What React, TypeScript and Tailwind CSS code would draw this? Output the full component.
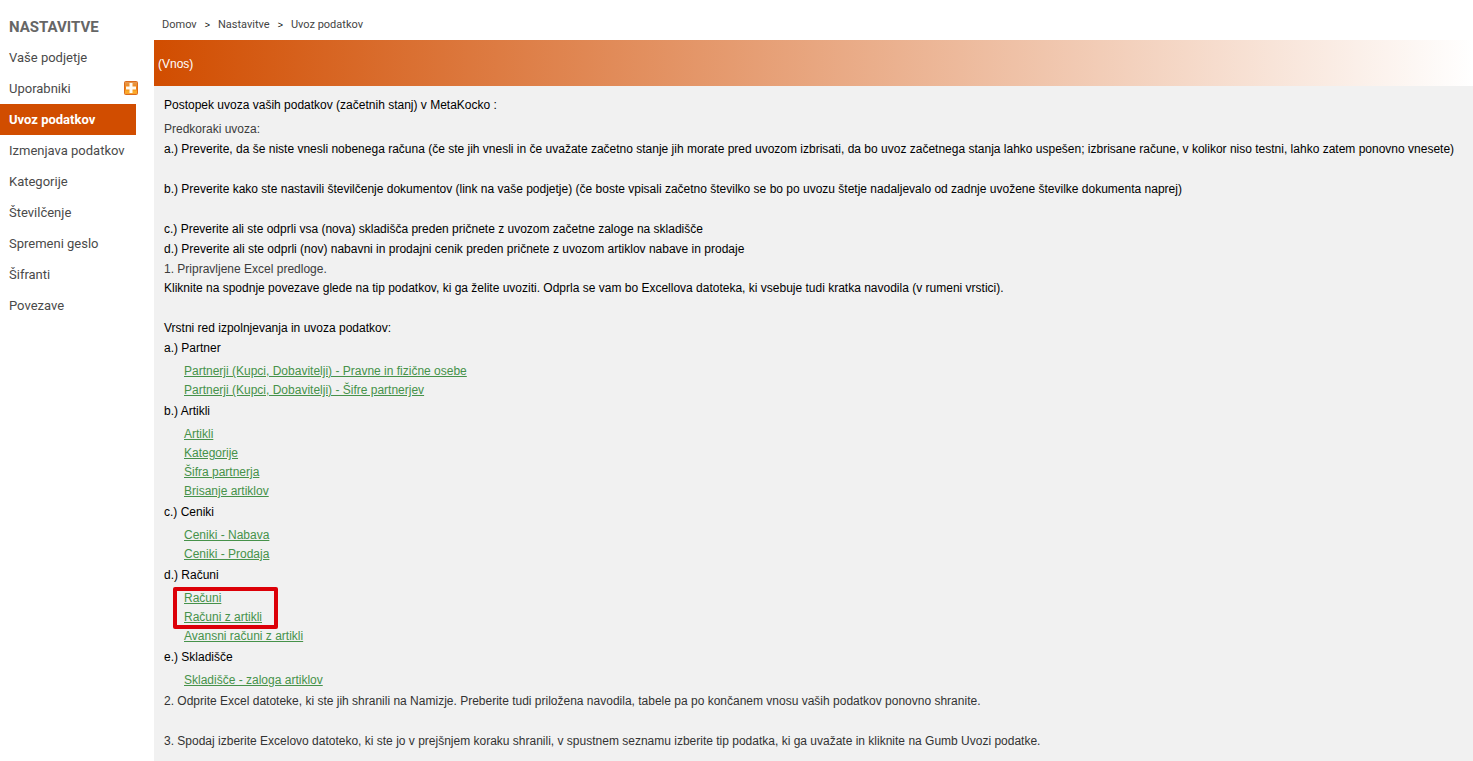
import React from "react";

type MenuItem = { label: string; active?: boolean; addLabel?: string };
type LinkEntry = { label: string; marked?: boolean };
type Group = { title: string; links: LinkEntry[] };

const menu: MenuItem[] = [
  { label: "Vaše podjetje" },
  { label: "Uporabniki", addLabel: "Dodaj uporabnika" },
  { label: "Uvoz podatkov", active: true },
  { label: "Izmenjava podatkov" },
  { label: "Kategorije" },
  { label: "Številčenje" },
  { label: "Spremeni geslo" },
  { label: "Šifranti" },
  { label: "Povezave" },
];

const groups: Group[] = [
  {
    title: "a.) Partner",
    links: [
      { label: "Partnerji (Kupci, Dobavitelji) - Pravne in fizične osebe" },
      { label: "Partnerji (Kupci, Dobavitelji) - Šifre partnerjev" },
    ],
  },
  {
    title: "b.) Artikli",
    links: [
      { label: "Artikli" },
      { label: "Kategorije" },
      { label: "Šifra partnerja" },
      { label: "Brisanje artiklov" },
    ],
  },
  {
    title: "c.) Ceniki",
    links: [{ label: "Ceniki - Nabava" }, { label: "Ceniki - Prodaja" }],
  },
  {
    title: "d.) Računi",
    links: [
      { label: "Računi", marked: true },
      { label: "Računi z artikli", marked: true },
      { label: "Avansni računi z artikli" },
    ],
  },
  { title: "e.) Skladišče", links: [{ label: "Skladišče - zaloga artiklov" }] },
];

function PlusIcon() {
  return (
    <svg viewBox="0 0 14 14" className="size-3.5" aria-hidden="true">
      <defs>
        <linearGradient id="plus-fill" x1="0" y1="0" x2="0" y2="1">
          <stop offset="0" stopColor="#e39a58" />
          <stop offset="0.4" stopColor="#ef8a1e" />
          <stop offset="0.5" stopColor="#ee7a08" />
          <stop offset="0.8" stopColor="#fcb02c" />
          <stop offset="1" stopColor="#f79a2c" />
        </linearGradient>
      </defs>
      <rect x="0.5" y="0.5" width="13" height="13" rx="1" fill="url(#plus-fill)" stroke="#dc6a1c" />
      <path d="M5.5 2h3v3.5H12v3H8.5V12h-3V8.5H2v-3h3.5z" fill="#fffaf2" />
    </svg>
  );
}

function Sidebar() {
  return (
    <nav aria-label="Nastavitve" className="w-[136px] shrink-0 pt-3 font-['Roboto',sans-serif]">
      <h2 className="pl-[9px] text-[15px] leading-[30px] font-bold text-[#666666]">NASTAVITVE</h2>
      <ul>
        {menu.map((item) => (
          <li key={item.label} className="relative">
            <a
              href="#"
              aria-current={item.active ? "page" : undefined}
              className={
                item.active
                  ? "block bg-[#d14d00] pl-[9px] text-[13px] leading-[31px] font-bold text-white"
                  : "block pl-[9px] text-[13px] leading-[31px] text-[#4a4a4a]"
              }
            >
              {item.label}
            </a>
            {item.addLabel && (
              <button type="button" aria-label={item.addLabel} className="absolute top-2 -right-0.5">
                <PlusIcon />
              </button>
            )}
          </li>
        ))}
      </ul>
    </nav>
  );
}

function Breadcrumbs() {
  return (
    <nav aria-label="Pot" className="h-10 pt-[13px] pl-2">
      <ol className="flex gap-2 font-['Roboto',sans-serif] text-[11px] leading-6 text-[#444444]">
        <li>
          <a href="#">Domov</a>
        </li>
        <li aria-hidden="true" className="font-['Liberation_Sans',sans-serif] text-[9px] text-black">&gt;</li>
        <li>
          <a href="#">Nastavitve</a>
        </li>
        <li aria-hidden="true" className="font-['Liberation_Sans',sans-serif] text-[9px] text-black">&gt;</li>
        <li>
          <a href="#">Uvoz podatkov</a>
        </li>
      </ol>
    </nav>
  );
}

function LinkRows({ links }: { links: LinkEntry[] }) {
  return (
    <>
      {links.map((link) => (
        <li key={link.label} className="leading-[19px]">
          <a href="#" className="text-[#46924a] underline">
            {link.label}
          </a>
        </li>
      ))}
    </>
  );
}

function LinkGroup({ group }: { group: Group }) {
  const marked = group.links.filter((link) => link.marked);
  const plain = group.links.filter((link) => !link.marked);
  return (
    <section>
      <h3>{group.title}</h3>
      <div className="mt-1 mb-px pl-5">
        {marked.length > 0 && (
          <div className="relative w-fit">
            <ul>
              <LinkRows links={marked} />
            </ul>
            <div className="pointer-events-none absolute -top-0.5 -right-4 -bottom-0.5 -left-[11px] rounded-xs border-4 border-[#dc0008]" />
          </div>
        )}
        <ul>
          <LinkRows links={plain} />
        </ul>
      </div>
    </section>
  );
}

export default function App() {
  return (
    <div className="flex min-h-screen gap-[18px] bg-white">
      <Sidebar />
      <main className="flex min-w-0 flex-1 flex-col font-['Liberation_Sans',Arial,sans-serif] text-xs text-black">
        <Breadcrumbs />
        <h1 className="bg-linear-to-r/srgb from-[#d14d00] to-white pt-0.5 pl-1 leading-[44px] text-white">(Vnos)</h1>
        <div className="flex-1 bg-[#f1f1f1] px-2.5 pt-[9px] pb-2.5 leading-5">
          <p className="mb-[5px]">Postopek uvoza vaših podatkov (začetnih stanj) v MetaKocko :</p>
          <p className="leading-[19px] text-[#3c3c3c]">Predkoraki uvoza:</p>
          <p className="mb-5">
            a.) Preverite, da še niste vnesli nobenega računa (če ste jih vnesli in če uvažate začetno stanje jih morate
            pred uvozom izbrisati, da bo uvoz začetnega stanja lahko uspešen; izbrisane račune, v kolikor niso testni,
            lahko zatem ponovno vnesete)
          </p>
          <p className="mb-5">
            b.) Preverite kako ste nastavili številčenje dokumentov (link na vaše podjetje) (če boste vpisali začetno
            številko se bo po uvozu štetje nadaljevalo od zadnje uvožene številke dokumenta naprej)
          </p>
          <p>c.) Preverite ali ste odprli vsa (nova) skladišča preden pričnete z uvozom začetne zaloge na skladišče</p>
          <p>d.) Preverite ali ste odprli (nov) nabavni in prodajni cenik preden pričnete z uvozom artiklov nabave in prodaje</p>
          <p className="pt-px leading-[18px] text-[#3c3c3c]">1. Pripravljene Excel predloge.</p>
          <p className="mb-5">
            Kliknite na spodnje povezave glede na tip podatkov, ki ga želite uvoziti. Odprla se vam bo Excellova datoteka,
            ki vsebuje tudi kratka navodila (v rumeni vrstici).
          </p>
          <h2>Vrstni red izpolnjevanja in uvoza podatkov:</h2>
          {groups.map((group) => (
            <LinkGroup key={group.title} group={group} />
          ))}
          <p className="mb-5 text-[#333333]">
            2. Odprite Excel datoteke, ki ste jih shranili na Namizje. Preberite tudi priložena navodila, tabele pa po
            končanem vnosu vaših podatkov ponovno shranite.
          </p>
          <p className="text-[#333333]">
            3. Spodaj izberite Excelovo datoteko, ki ste jo v prejšnjem koraku shranili, v spustnem seznamu izberite tip
            podatka, ki ga uvažate in kliknite na Gumb Uvozi podatke.
          </p>
        </div>
      </main>
    </div>
  );
}
